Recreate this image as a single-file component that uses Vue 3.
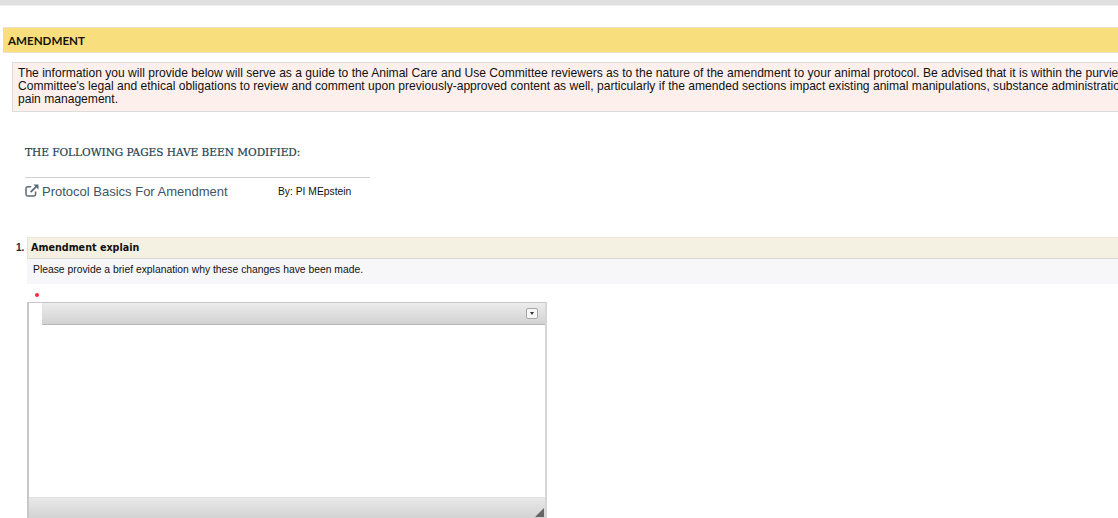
<script setup>
const lines = [
  "The information you will provide below will serve as a guide to the Animal Care and Use Committee reviewers as to the nature of the amendment to your animal protocol. Be advised that it is within the purview of the",
  "Committee's legal and ethical obligations to review and comment upon previously-approved content as well, particularly if the amended sections impact existing animal manipulations, substance administration or",
  "pain management."
]
</script>

<template>
  <div class="page">
    <div class="topbar"></div>
    <div class="section-head">AMENDMENT</div>
    <div class="notice">
      <div v-for="line in lines" :key="line">{{ line }}</div>
    </div>
    <div class="modified">
      <h2 class="modified-title">THE FOLLOWING PAGES HAVE BEEN MODIFIED:</h2>
      <div class="modified-row">
        <a class="page-link">
          <svg class="ext" width="14" height="13" viewBox="0 0 14 13" fill="none" stroke="#5a6a74" stroke-width="1.5">
            <path d="M10.6 7.5v2.8a1.6 1.6 0 0 1-1.6 1.6H2.6A1.6 1.6 0 0 1 1 10.300V4.400a1.600 1.600 0 0 1 1.600-1.600h3.600" />
            <path d="M5.600 8.200 12.200 1.600" stroke-width="1.700" />
            <path d="M8.500 .6h5v5z" fill="#5a6a74" stroke="none" />
          </svg>
          <span>Protocol Basics For Amendment</span>
        </a>
        <span class="by">By: PI MEpstein</span>
      </div>
    </div>
    <div class="question">
      <div class="q-num">1.</div>
      <div class="q-body">
        <div class="q-title">Amendment explain</div>
        <div class="q-help">Please provide a brief explanation why these changes have been made.</div>
        <div class="req"><i></i></div>
        <div class="editor">
          <div class="toolbar">
            <span class="tool-btn"><i></i></span>
          </div>
          <div class="edit-area"></div>
          <div class="statusbar"><i class="grip"></i></div>
        </div>
      </div>
    </div>
  </div>
</template>

<style>
html, body { margin: 0; background: #fff; overflow: hidden; }
</style>

<style scoped>
.page {
  width: 1118px;
  height: 518px;
  overflow: hidden;
  font-family: "Liberation Sans", Arial, sans-serif;
  color: #111;
}
.topbar {
  height: 5px;
  background: #e0e0e0;
  border-bottom: 1px solid #eeeeee;
}
.section-head {
  margin: 21px 0 0 3px;
  height: 24px;
  line-height: 25px;
  padding-left: 5px;
  background: #f8de7c;
  border-top: 1px solid #e8e2c4;
  border-bottom: 1px solid #e8e2c4;
  font-family: Lato, sans-serif;
  font-weight: 700;
  font-size: 11.6px;
  color: #15130a;
  white-space: nowrap;
}
.notice {
  margin: 9px 0 0 12px;
  height: 44px;
  padding: 4px 0 0 5px;
  background: #fdf0ec;
  border: 1px solid #dcdcdc;
  border-right: 0;
  font-size: 12.08px;
  line-height: 13px;
  white-space: nowrap;
  overflow: hidden;
}
.modified { margin: 33px 0 0 25px; width: 345px; }
.modified-title {
  margin: 0;
  font-family: "DejaVu Serif Condensed", "DejaVu Serif", serif;
  font-stretch: condensed;
  font-weight: 400;
  font-size: 11.7px;
  line-height: 14px;
  color: #1d4250;
  -webkit-text-stroke: 0.2px #1d4250;
  white-space: nowrap;
}
.modified-row {
  margin-top: 18px;
  border-top: 1px solid #cfcfcf;
  padding-top: 3px;
  display: flex;
  align-items: center;
  height: 20px;
}
.page-link {
  display: flex;
  align-items: center;
  gap: 3px;
  width: 253px;
  font-size: 13px;
  color: #3b5664;
}
.ext { flex: none; margin-top: -2px; }
.by { font-size: 10.3px; color: #111; }
.question {
  margin: 36px 0 0 16px;
  display: flex;
}
.q-num {
  width: 11px;
  font-size: 10px;
  font-weight: 700;
  line-height: 21px;
  color: #1b2a3a;
}
.q-body { flex: 1; min-width: 0; }
.q-title {
  height: 20px;
  line-height: 20px;
  padding-left: 3px;
  background: #f4f0e2;
  border-top: 1px solid #ebe8dc;
  border-bottom: 1px solid #d8d8d4;
  border-left: 1px solid #e4e2d8;
  font-family: "DejaVu Sans", sans-serif;
  font-size: 9.6px;
  font-weight: 700;
  color: #111;
}
.q-help {
  height: 25px;
  line-height: 21px;
  padding-left: 6px;
  background: #f7f7fa;
  font-size: 10.35px;
  color: #111;
}
.req { height: 18px; position: relative; }
.req i {
  position: absolute;
  left: 8px;
  top: 9px;
  width: 4px;
  height: 4px;
  border-radius: 50%;
  background: #f0303a;
}
.editor {
  width: 520px;
  box-sizing: border-box;
  border: 1px solid #c8c8c8;
  border-left: 2px solid #c8c8c8;
  border-right: 2px solid #d6d6d6;
  border-bottom: 0;
}
.toolbar {
  margin-left: 13px;
  height: 21px;
  background: linear-gradient(#ececec, #d2d2d2);
  border-bottom: 1px solid #b8b8b8;
  display: flex;
  align-items: center;
  justify-content: flex-end;
  padding-right: 7px;
}
.tool-btn {
  width: 10px;
  height: 9px;
  background: #f6f6f6;
  border: 1px solid #a8a8a8;
  border-radius: 2px;
  display: flex;
  align-items: center;
  justify-content: center;
}
.tool-btn i {
  width: 0;
  height: 0;
  border-left: 2.5px solid transparent;
  border-right: 2.5px solid transparent;
  border-top: 3px solid #333;
}
.edit-area { height: 172px; background: #fff; }
.statusbar {
  height: 21px;
  background: linear-gradient(#e8e8e8, #d2d2d2);
  border-top: 1px solid #e0e0e0;
  position: relative;
}
.grip {
  position: absolute;
  right: 1px;
  bottom: 2px;
  width: 9px;
  height: 9px;
  background: #666;
  clip-path: polygon(100% 0, 100% 100%, 0 100%);
}
</style>
